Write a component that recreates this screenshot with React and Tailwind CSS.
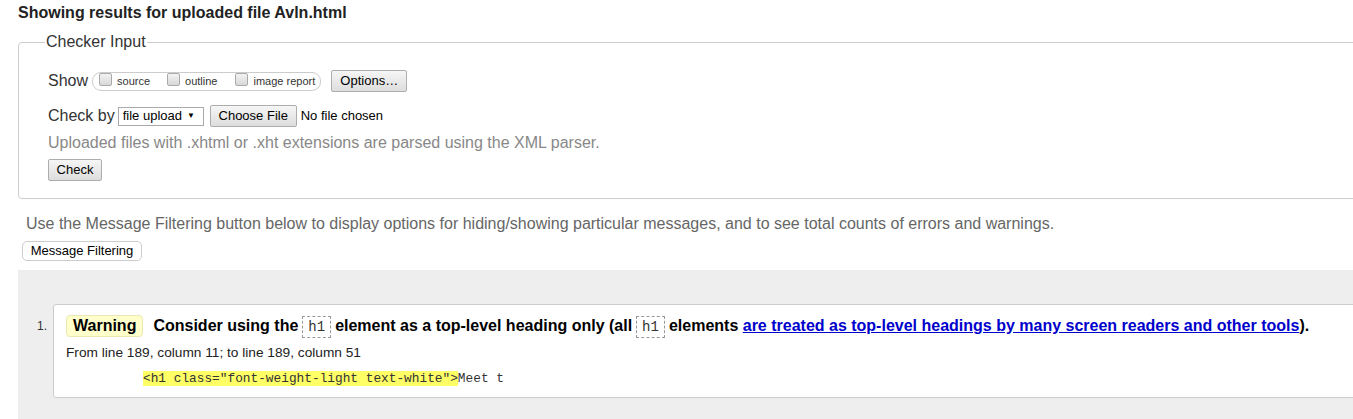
const Btn = ({ children, className = "" }) => (
  <span
    className={`inline-flex items-center justify-center border border-[#adadad] bg-gradient-to-b from-[#f6f6f6] to-[#dddddd] text-[13px] text-black rounded-[2px] ${className}`}
  >
    {children}
  </span>
);

const Box = () => (
  <span className="inline-block w-[13px] h-[13px] border border-[#aaa] rounded-[2px] bg-gradient-to-b from-[#f3f3f3] to-[#d8d8d8] mr-[5px] relative top-[-2px]" />
);

const Code = ({ children }) => (
  <code className="inline-block border border-dashed border-[#999] px-[5px] mx-[4px] font-['Liberation_Mono',monospace] font-normal text-[14px] leading-[20px] text-[#333]">
    {children}
  </code>
);

export default function App() {
  return (
    <div className="w-[1353px] h-[419px] overflow-hidden bg-white font-['Liberation_Sans',Arial,sans-serif] text-[#222]">
      <h2 className="pl-[18px] pt-[4px] text-[16px] leading-[18px] font-bold">
        Showing results for uploaded file Avln.html
      </h2>

      <fieldset className="ml-[18px] mr-[-40px] mt-[11px] h-[166px] border border-[#ccc] rounded-[4px] pl-[29px]">
        <legend className="ml-[-3px] px-[1px] text-[16px] text-[#333] leading-[18px]">Checker Input</legend>

        <div className="flex items-center mt-[19px] h-[22px]">
          <span className="text-[16px] text-[#333] mr-[4px]">Show</span>
          <span className="flex items-center h-[19px] border border-[#ccc] rounded-[9px] pl-[6px] pr-[5px] text-[11px] text-[#333]">
            <Box />
            <span className="mr-[17px]">source</span>
            <Box />
            <span className="mr-[18px]">outline</span>
            <Box />
            <span>image report</span>
          </span>
          <Btn className="ml-[10px] w-[76px] h-[22px]">Options…</Btn>
        </div>

        <div className="flex items-center mt-[13px] h-[22px]">
          <span className="text-[16px] text-[#333] mr-[3px]">Check by</span>
          <span className="flex items-center h-[19px] w-[86px] border border-[#aaa] pl-[4px] text-[13px] text-black">
            file upload
            <span className="text-[8px] ml-[5px]">▼</span>
          </span>
          <Btn className="ml-[6px] w-[87px] h-[22px]">Choose File</Btn>
          <span className="ml-[4px] text-[13px] text-black">No file chosen</span>
        </div>

        <p className="mt-[6px] text-[16px] leading-[20px] text-[#888]">
          Uploaded files with .xhtml or .xht extensions are parsed using the XML parser.
        </p>

        <div className="mt-[4px]">
          <Btn className="w-[54px] h-[22px]">Check</Btn>
        </div>
      </fieldset>

      <p className="pl-[26px] mt-[15px] text-[16px] leading-[20px] text-[#666]">
        Use the Message Filtering button below to display options for hiding/showing particular messages, and to see total counts of errors and warnings.
      </p>
      <div className="pl-[22px] mt-[4px]">
        <span className="inline-flex items-center justify-center w-[120px] h-[20px] border border-[#ccc] rounded-[5px] bg-white text-[13px] text-black">
          Message Filtering
        </span>
      </div>

      <div className="ml-[18px] mt-[8px] h-[200px] bg-[#eeeeee] pt-[34px] pl-[19px] flex">
        <span className="w-[16px] pt-[13px] text-[12px] text-[#333]">1.</span>
        <div className="flex-1 mr-[-20px] h-[94px] bg-white border border-[#ccc] rounded-[3px] pl-[12px] pt-[9px]">
          <div className="flex items-center h-[24px] text-[16px] font-bold text-black whitespace-nowrap">
            <span className="inline-flex items-center h-[22px] px-[6px] bg-[#ffffcc] border border-[#ece6b0] rounded-[4px] mr-[10px]">
              Warning
            </span>
            <span>
              Consider using the<Code>h1</Code>element as a top-level heading only (all<Code>h1</Code>elements{" "}
              <a className="text-[#0000cc] underline">are treated as top-level headings by many screen readers and other tools</a>).
            </span>
          </div>
          <p className="mt-[7px] text-[13.7px] leading-[16px] text-[#222]">
            From line 189, column 11; to line 189, column 51
          </p>
          <p className="mt-[9px] pl-[77px] font-['Liberation_Mono',monospace] text-[12.8px] leading-[18px] text-[#333] whitespace-pre">
            <span className="bg-[#ffff66]">&lt;h1 class="font-weight-light text-white"&gt;</span>Meet t
          </p>
        </div>
      </div>
    </div>
  );
}
